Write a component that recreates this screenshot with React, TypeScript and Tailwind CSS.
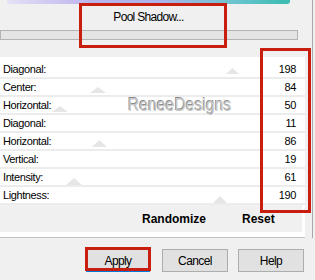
const rows = [
  { label: "Diagonal:", value: 198 },
  { label: "Center:", value: 84 },
  { label: "Horizontal:", value: 50 },
  { label: "Diagonal:", value: 11 },
  { label: "Horizontal:", value: 86 },
  { label: "Vertical:", value: 19 },
  { label: "Intensity:", value: 61 },
  { label: "Lightness:", value: 190 },
];

// faint slider thumbs behind the rows
const thumbs = [
  { left: 226, top: 11, w: 13, h: 6 },
  { left: 90, top: 30, w: 16, h: 6 },
  { left: 52, top: 49, w: 16, h: 6 },
  { left: 92, top: 83, w: 15, h: 7 },
  { left: 66, top: 121, w: 16, h: 7 },
  { left: 212, top: 139, w: 16, h: 8 },
];

function Thumb({ left, top, w, h }: { left: number; top: number; w: number; h: number }) {
  return (
    <svg
      className="absolute pointer-events-none"
      style={{ left, top }}
      width={w}
      height={h}
      viewBox={`0 0 ${w} ${h}`}
    >
      <polygon points={`${w / 2},0 ${w},${h} 0,${h}`} fill="#e6e6e6" />
    </svg>
  );
}

export default function App() {
  return (
    <div className="relative w-[315px] h-[280px] overflow-hidden bg-[#f0f0f0] text-black font-['Liberation_Sans',Arial,sans-serif]">
      <div className="flex">
        <div className="w-[305px] flex flex-col">
          {/* preview strip */}
          <div className="ml-[7px] w-[283px] h-[4px] rounded-b-[3px] bg-[linear-gradient(90deg,#e6e0f6_0%,#bab4ee_30%,#aab4ea_55%,#6cc4d0_80%,#38bcb0_100%)]" />

          {/* preset name */}
          <div className="h-[26px] flex items-center justify-center pr-[8px] text-[12px] tracking-[-0.7px]">
            Pool Shadow...
          </div>

          {/* progress bar */}
          <div className="h-[10px] w-[298px] border border-[#b4b4b4] bg-[#e4e4e4]" />

          <div className="h-[17px]" />

          {/* sliders */}
          <div className="relative bg-white pt-[4px]">
            {thumbs.map((t, i) => (
              <Thumb key={i} {...t} />
            ))}
            {rows.map((r, i) => (
              <div
                key={i}
                className="relative h-[18px] flex items-center justify-between pl-[3px] pr-[9px] border-b-2 border-[#ececec]"
              >
                <span className="text-[11px] tracking-[-0.4px] leading-none">{r.label}</span>
                <span className="text-[11px] tracking-[-0.4px] leading-none">{r.value}</span>
              </div>
            ))}
          </div>

          {/* randomize / reset */}
          <div className="h-[27px] flex items-center border-r-[3px] border-white">
            <span className="ml-[142px] text-[12px] font-bold">Randomize</span>
            <span className="ml-[36px] text-[12px] font-bold">Reset</span>
          </div>
          <div className="h-[5px] bg-white" />
          <div className="h-px bg-[#c4c4c4]" />
        </div>
        <div className="w-[7px]" />
        <div className="w-px h-[238px] bg-[#a8a8a8]" />
      </div>

      {/* dialog buttons */}
      <div className="flex mt-[11px] pl-[86px]">
        <button className="w-[64px] h-[23px] border border-[#0078d7] bg-[#e1e1e1] text-[12px] tracking-[-0.6px]">
          Apply
        </button>
        <button className="ml-[12px] w-[66px] h-[23px] border border-[#adadad] bg-[#e1e1e1] text-[12px] tracking-[-0.6px]">
          Cancel
        </button>
        <button className="ml-[10px] w-[66px] h-[23px] border border-[#adadad] bg-[#e1e1e1] text-[12px] tracking-[-0.6px]">
          Help
        </button>
      </div>

      {/* watermark */}
      <div className="absolute left-[128px] top-[95px] origin-left scale-x-[0.83] text-[19px] leading-none text-[#c8c8c8] [text-shadow:-1px_-1px_0_#8c8c8c,1px_1px_0_#ffffff] pointer-events-none">
        ReneeDesigns
      </div>

      {/* annotation boxes */}
      <div className="absolute left-[79px] top-[3px] w-[148px] h-[45px] border-[3px] border-[#c81e10]" />
      <div className="absolute left-[260px] top-[48px] w-[51px] h-[165px] border-[3px] border-[#c81e10]" />
      <div className="absolute left-[85px] top-[247px] w-[66px] h-[24px] border-[3px] border-[#c81e10]" />
    </div>
  );
}
